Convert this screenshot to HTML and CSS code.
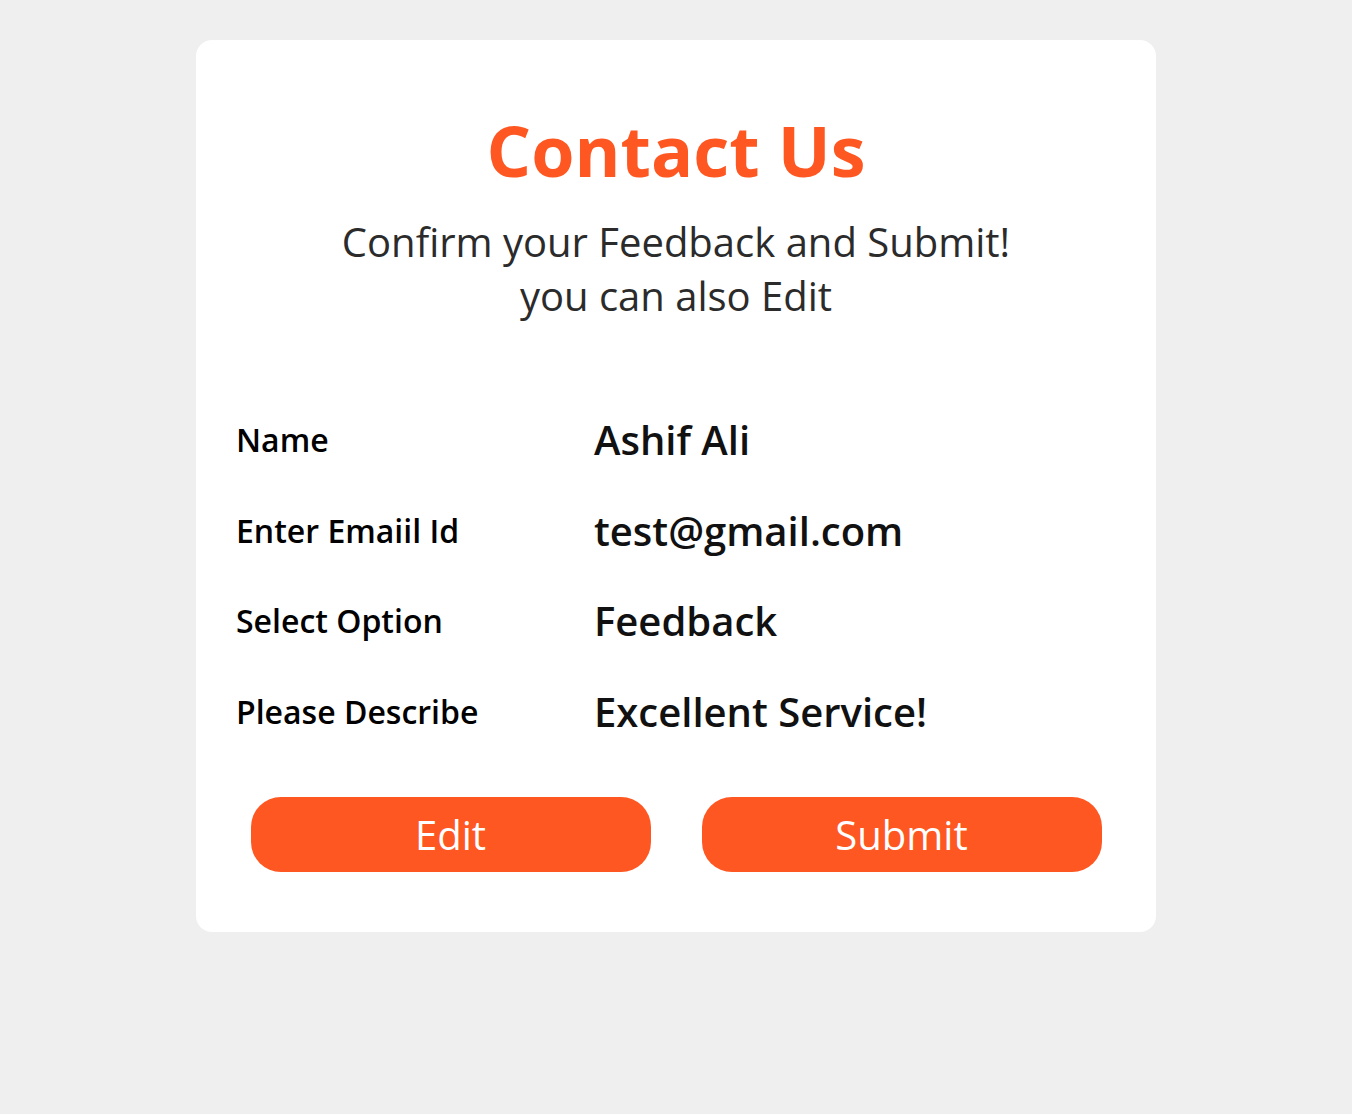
FILE: index.html
```html
<!DOCTYPE html>
<html lang="en">
<head>
<meta charset="utf-8">
<title>Contact Us</title>
<link rel="stylesheet" href="styles.css">
</head>
<body>
<main class="page">
  <section class="card">
    <h1 class="title">Contact Us</h1>
    <p class="subtitle">Confirm your Feedback and Submit!<br>you can also Edit</p>
    <div class="details">
      <div class="row"><span class="label">Name</span><span class="value">Ashif Ali</span></div>
      <div class="row"><span class="label">Enter Emaiil Id</span><span class="value">test@gmail.com</span></div>
      <div class="row"><span class="label">Select Option</span><span class="value">Feedback</span></div>
      <div class="row"><span class="label">Please Describe</span><span class="value">Excellent Service!</span></div>
    </div>
    <div class="actions">
      <button class="btn" type="button">Edit</button>
      <button class="btn" type="button">Submit</button>
    </div>
  </section>
</main>
</body>
</html>
```
FILE: styles.css
```css
* { box-sizing: border-box; }
html, body { margin: 0; padding: 0; }
body {
  background: #efefef;
  font-family: "Open Sans", "Noto Sans", sans-serif;
  color: #000;
  min-height: 1114px;
}
.page {
  display: flex;
  justify-content: center;
  padding-top: 40px;
}
.card {
  width: 960px;
  background: #fff;
  border-radius: 16px;
  padding: 62px 40px 60px;
}
.title {
  margin: 0;
  text-align: center;
  color: #ff5722;
  font-size: 70px;
  font-weight: 700;
  line-height: 96px;
}
.subtitle {
  margin: 17px 0 0;
  text-align: center;
  color: #2b2b2b;
  font-size: 40px;
  font-weight: 400;
  line-height: 54px;
}
.details {
  margin-top: 71px;
  display: flex;
  flex-direction: column;
}
.row {
  display: grid;
  grid-template-columns: 358px 1fr;
  align-items: center;
  padding: 18px 0;
  height: 90.5px;
}
.label {
  font-size: 32px;
  font-weight: 600;
  line-height: normal;
}
.value {
  font-size: 40px;
  font-weight: 600;
  line-height: normal;
  color: #111;
}
.actions {
  margin-top: 41px;
  display: flex;
  justify-content: center;
  gap: 51px;
}
.btn {
  width: 400px;
  height: 75px;
  border: none;
  border-radius: 30px;
  background: #ff5722;
  color: #fff;
  font-family: "Open Sans", "Noto Sans", sans-serif;
  font-size: 40px;
  font-weight: 400;
  line-height: 1;
  padding: 0;
}
```
